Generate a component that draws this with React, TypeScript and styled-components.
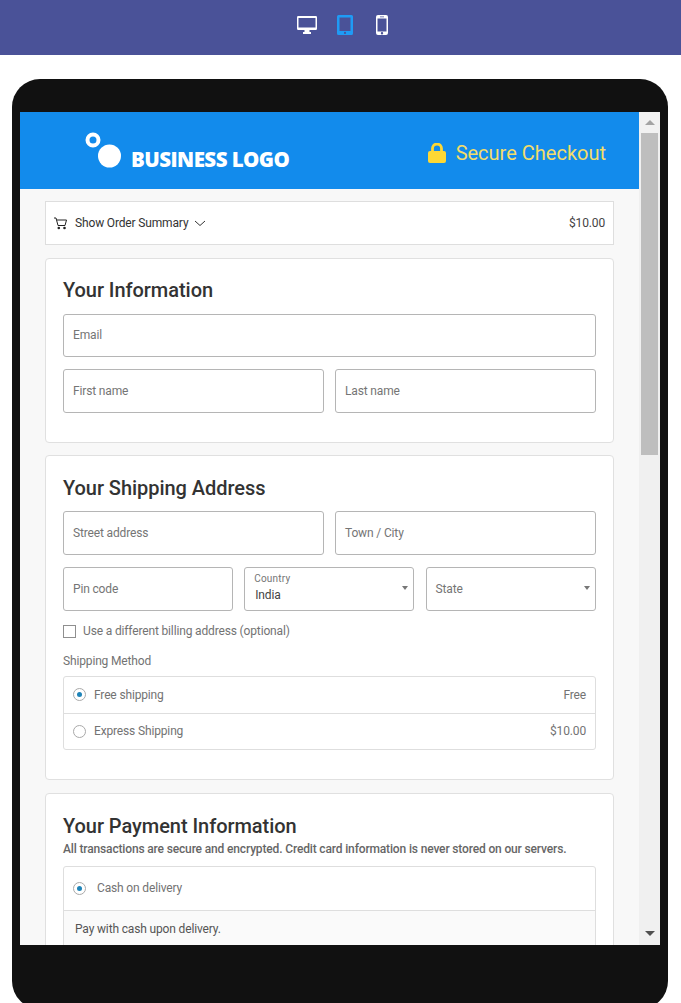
import React from "react";
import styled, { createGlobalStyle } from "styled-components";

const Global = createGlobalStyle`
  html, body { margin: 0; padding: 0; background: #fff; height: 1003px; overflow: hidden; }
  * { box-sizing: border-box; }
  body { font-family: Roboto, "Liberation Sans", sans-serif; }
`;
const Page = styled.div`width: 681px; height: 1003px; overflow: hidden; background: #fff;`;
const TopBar = styled.div`
  height: 55px; background: #4a5298; display: flex; justify-content: flex-start;
  align-items: flex-start; padding: 15px 0 0 288px;
`;
const DeviceButton = styled.div<{ $w: number }>`
  width: ${(p) => p.$w}px; display: flex; justify-content: center; height: 22px;
`;
const Tablet = styled.div`
  margin: 24px 0 0 12px; width: 656px; height: 930px; background: #111; border-radius: 28px;
  padding: 33px 8px 0;
`;
const Screen = styled.div`
  height: 833px; display: flex; overflow: hidden; background: #f7f7f7;
`;
const Viewport = styled.div`width: 619px; height: 833px; overflow: hidden; background: #f8f8f8;`;
const Scrollbar = styled.div`
  width: 21px; background: #f0f0f0; display: flex; flex-direction: column; align-items: center;
`;
const ScrollButton = styled.div<{ $h: number; $bg: string }>`
  height: ${(p) => p.$h}px; width: 100%; display: flex; align-items: center; justify-content: center; background: ${(p) => p.$bg};
`;
const Thumb = styled.div`width: 17px; height: 322px; background: #bebebe; margin-left: -1px;`;
const Spacer = styled.div`flex: 1;`;
const Up = styled.div`width: 0; height: 0; border-left: 5px solid transparent; border-right: 5px solid transparent; border-bottom: 5px solid #a3a3a3;`;
const Down = styled.div`width: 0; height: 0; border-left: 5px solid transparent; border-right: 5px solid transparent; border-top: 5px solid #505050;`;

const Header = styled.header`
  height: 77px; background: #128bec; display: flex; align-items: flex-start; justify-content: space-between;
  padding: 0 33px 0 65px;
`;
const Logo = styled.div`display: flex; align-items: flex-start; padding-top: 20px; width: 210px;`;
const LogoText = styled.span`
  font-family: "Open Sans", sans-serif; font-weight: 800; font-size: 20.5px; color: #fff; letter-spacing: -0.55px;
  margin: 15px 0 0 0; line-height: 24px; white-space: nowrap;
`;
const Secure = styled.div`display: flex; align-items: center; gap: 10px; margin-top: 28px;`;
const SecureText = styled.span`font-size: 20px; color: #f3dd6a; line-height: 26px;`;

const Content = styled.div`padding: 12px 25px 0; display: flex; flex-direction: column;`;
const Summary = styled.div`
  height: 44px; background: #fff; border: 1px solid #dedede; display: flex; align-items: center;
  padding: 0 8px; font-size: 12px; letter-spacing: -0.15px; color: #333; margin-bottom: 13px;
`;
const SummaryLabel = styled.span`margin-left: 8px; margin-right: 6px;`;
const SummaryPrice = styled.span`margin-left: auto; color: #444;`;
const Card = styled.section<{ $h: number; $pt: number; $mb: number }>`
  background: #fff; border: 1px solid #e0e0e0; border-radius: 4px; height: ${(p) => p.$h}px;
  padding: ${(p) => p.$pt}px 17px 0; margin-bottom: ${(p) => p.$mb}px; flex: none; display: flex; flex-direction: column;
`;
const Title = styled.h2`margin: 0; font-size: 20px; letter-spacing: -0.05px; font-weight: 500; color: #333; line-height: 26px;`;
const Note = styled.p`margin: 2px 0 0; font-size: 12px; letter-spacing: -0.15px; font-weight: 500; color: #666; line-height: 16px;`;
const Row = styled.div<{ $cols?: string; $mt?: number; $gap?: number }>`
  display: grid; grid-template-columns: ${(p) => p.$cols || "1fr 1fr"}; column-gap: ${(p) => p.$gap ?? 11}px; margin-top: ${(p) => p.$mt ?? 12}px;
`;
const Field = styled.div<{ $short?: boolean }>`
  height: ${(p) => (p.$short ? 43 : 44)}px; border: 1px solid #b5b5b5; border-radius: 3px; background: #fff;
  display: flex; align-items: center; padding: 0 9px ${(p) => (p.$short ? 1 : 0)}px; font-size: 12px; letter-spacing: -0.15px; color: #757575; position: relative;
`;
const Stack = styled.div`display: flex; flex-direction: column; padding-bottom: 3px;`;
const Small = styled.span`font-size: 10px; color: #757575; line-height: 12px; letter-spacing: 0.2px;`;
const Val = styled.span`font-size: 12px; color: #444; line-height: 16px; margin-top: 2px; padding-left: 1px;`;
const Caret = styled.span`
  position: absolute; right: 5px; top: 18px; width: 0; height: 0;
  border-left: 3px solid transparent; border-right: 3px solid transparent; border-top: 4px solid #777;
`;
const CheckRow = styled.label`display: flex; align-items: center; gap: 7px; margin-top: 14px; font-size: 12px; letter-spacing: -0.15px; color: #737373; height: 13px;`;
const CheckText = styled.span`margin-top: -2px;`;
const Box = styled.span`width: 13px; height: 13px; border: 1px solid #8f8f8f; background: #fff; display: inline-block;`;
const Method = styled.div`font-size: 12px; letter-spacing: -0.15px; color: #737373; line-height: 16px; margin-top: 15px;`;
const List = styled.div<{ $mt: number }>`border: 1px solid #dedede; border-radius: 3px; margin-top: ${(p) => p.$mt}px;`;
const ListRow = styled.div<{ $h: number; $gap: number }>`
  height: ${(p) => p.$h}px; display: flex; align-items: center; padding: 0 9px 1px; font-size: 12px; letter-spacing: -0.15px; color: #737373;
  gap: ${(p) => p.$gap}px;
  & + & { border-top: 1px solid #dedede; }
`;
const Price = styled.span`margin-left: auto;`;
const Radio = styled.span<{ $on?: boolean }>`
  width: 13px; height: 13px; border-radius: 50%; border: 1px solid #a9a9a9; background: #fff;
  display: inline-flex; align-items: center; justify-content: center; flex: none;
  &::after { content: ""; width: 5px; height: 5px; border-radius: 50%; background: ${(p) => (p.$on ? "#1f84b8" : "transparent")}; }
`;
const PayBody = styled.div`
  background: #fafafa; border-top: 1px solid #dedede; height: 60px; padding: 10px 11px 0; font-size: 12px; letter-spacing: -0.15px; color: #555; line-height: 16px;
`;

const Desktop = () => (
  <svg width="20" height="18" viewBox="0 0 20 18" fill="#fff" style={{ marginTop: 1 }}>
    <path fillRule="evenodd" d="M1.2 0h17.6A1.2 1.2 0 0 1 20 1.2v11.6a1.2 1.2 0 0 1-1.2 1.2H12.500v2h1.500v2H6v-2h1.500v-2H1.2A1.2 1.2 0 0 1 0 12.8V1.2A1.2 1.2 0 0 1 1.2 0zM1.500 2v9.500h17V2z" />
  </svg>
);
const TabletIcon = () => (
  <svg width="16" height="20" viewBox="0 0 16 20" fill="#1f9bf5">
    <path fillRule="evenodd" d="M1.500 0h13A1.500 1.500 0 0 1 16 1.500v17a1.500 1.500 0 0 1-1.500 1.500h-13A1.500 1.500 0 0 1 0 18.500v-17A1.500 1.500 0 0 1 1.500 0zM2.500 2.500V16h11V2.500zM8 16.800a1.100 1.100 0 1 0 0 2.200 1.100 1.100 0 0 0 0-2.200z" />
  </svg>
);
const Phone = () => (
  <svg width="12" height="20" viewBox="0 0 12 20" fill="#fff">
    <path fillRule="evenodd" d="M2 0h8a2 2 0 0 1 2 2v16a2 2 0 0 1-2 2H2a2 2 0 0 1-2-2V2a2 2 0 0 1 2-2zM4 1.400v.8h4v-.8zM1.500 3.500v13h9v-13zM6 17a1.200 1.200 0 1 0 0 2.400 1.200 1.200 0 0 0 0-2.400z" />
  </svg>
);
const LogoMark = () => (
  <svg width="37" height="37" viewBox="0 0 37 37" style={{ flex: "none", marginRight: 9 }}>
    <circle cx="8" cy="8" r="5.500" fill="none" stroke="#fff" strokeWidth="4" />
    <circle cx="24.500" cy="24" r="11.500" fill="#fff" />
  </svg>
);
const Lock = () => (
  <svg width="18" height="20" viewBox="0 0 18 20">
    <path d="M4.500 9V5.500a4.500 4.500 0 0 1 9 0V9" fill="none" stroke="#fdd835" strokeWidth="2.800" />
    <rect x="0" y="8" width="18" height="12" rx="2" fill="#fdd835" />
  </svg>
);
const Cart = () => (
  <svg width="13" height="13" viewBox="0 0 13 13" fill="none" stroke="#222" strokeWidth="1">
    <path d="M0 1h2l2 7.500h7l1.500-5.500H2.800" />
    <circle cx="4.800" cy="11" r="1.300" fill="#222" stroke="none" />
    <circle cx="10.500" cy="11" r="1.300" fill="#222" stroke="none" />
  </svg>
);
const Chevron = () => (
  <svg width="12" height="7" viewBox="0 0 12 7" fill="none" stroke="#333" strokeWidth="1">
    <path d="M1 1l5 4.500L11 1" />
  </svg>
);

export default function App() {
  return (
    <Page>
      <Global />
      <TopBar>
        <DeviceButton $w={38}><Desktop /></DeviceButton>
        <DeviceButton $w={38}><TabletIcon /></DeviceButton>
        <DeviceButton $w={36}><Phone /></DeviceButton>
      </TopBar>
      <Tablet>
        <Screen>
          <Viewport>
            <Header>
              <Logo>
                <LogoMark />
                <LogoText>BUSINESS LOGO</LogoText>
              </Logo>
              <Secure>
                <Lock />
                <SecureText>Secure Checkout</SecureText>
              </Secure>
            </Header>
            <Content>
              <Summary>
                <Cart />
                <SummaryLabel>Show Order Summary</SummaryLabel>
                <Chevron />
                <SummaryPrice>$10.00</SummaryPrice>
              </Summary>
              <Card $h={185} $pt={18} $mb={12}>
                <Title>Your Information</Title>
                <Row $cols="1fr" $mt={11}><Field $short>Email</Field></Row>
                <Row><Field>First name</Field><Field>Last name</Field></Row>
              </Card>
              <Card $h={325} $pt={19} $mb={13}>
                <Title>Your Shipping Address</Title>
                <Row $mt={10}><Field>Street address</Field><Field>Town / City</Field></Row>
                <Row $cols="170px 170px 170px" $gap={11.25}>
                  <Field>Pin code</Field>
                  <Field>
                    <Stack>
                      <Small>Country</Small>
                      <Val>India</Val>
                    </Stack>
                    <Caret />
                  </Field>
                  <Field>State<Caret /></Field>
                </Row>
                <CheckRow><Box /><CheckText>Use a different billing address (optional)</CheckText></CheckRow>
                <Method>Shipping Method</Method>
                <List $mt={7}>
                  <ListRow $h={36} $gap={8}><Radio $on />Free shipping<Price>Free</Price></ListRow>
                  <ListRow $h={36} $gap={8}><Radio />Express Shipping<Price>$10.00</Price></ListRow>
                </List>
              </Card>
              <Card $h={200} $pt={19} $mb={12}>
                <Title>Your Payment Information</Title>
                <Note>All transactions are secure and encrypted. Credit card information is never stored on our servers.</Note>
                <List $mt={9}>
                  <ListRow $h={43} $gap={11}><Radio $on />Cash on delivery</ListRow>
                  <PayBody>Pay with cash upon delivery.</PayBody>
                </List>
              </Card>
            </Content>
          </Viewport>
          <Scrollbar>
            <ScrollButton $h={21} $bg="#f1f1f1"><Up /></ScrollButton>
            <Thumb />
            <Spacer />
            <ScrollButton $h={23} $bg="#f0f0f0"><Down /></ScrollButton>
          </Scrollbar>
        </Screen>
      </Tablet>
    </Page>
  );
}
